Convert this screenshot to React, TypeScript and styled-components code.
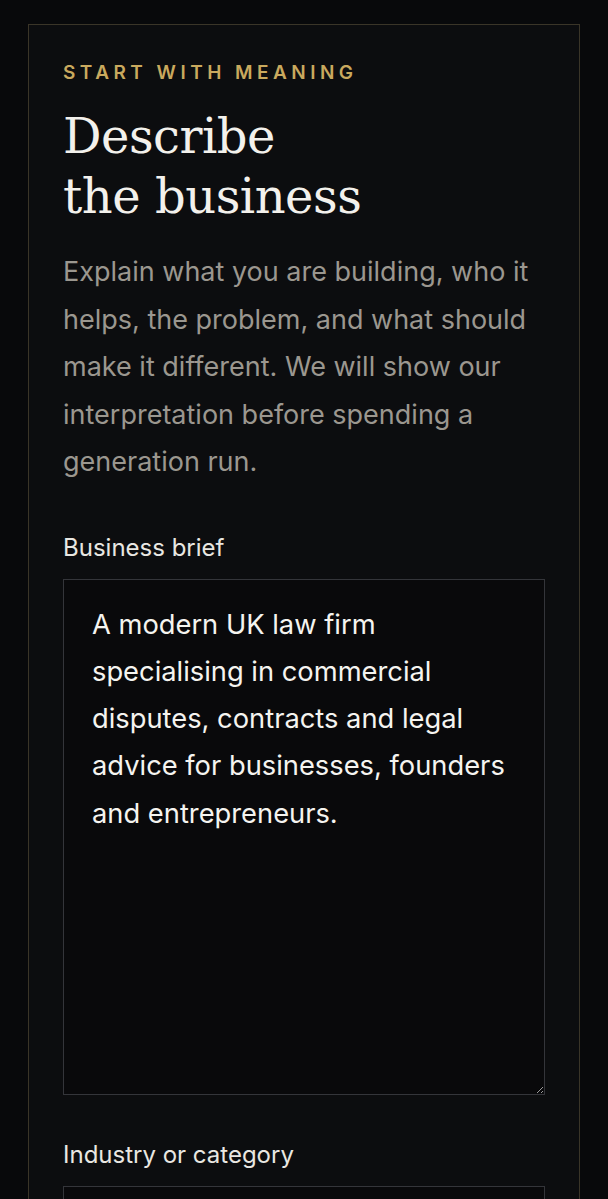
import React from 'react';
import styled, { createGlobalStyle } from 'styled-components';

const GlobalStyle = createGlobalStyle`
  html, body {
    margin: 0;
    padding: 0;
    background: #08090b;
  }
  body {
    font-family: Inter, 'Noto Sans', sans-serif;
    color: #ece9e2;
    overflow: hidden;
  }
  * {
    box-sizing: border-box;
  }
`;

const Page = styled.main`
  padding: 24px 28px 0;
  height: 1199px;
  overflow: hidden;
`;

const Panel = styled.section`
  background: #0c0d0f;
  border: 1px solid #3a3528;
  border-bottom: none;
  padding: 36px 34px 40px;
  min-height: 1175px;
`;

const Eyebrow = styled.p`
  margin: 0;
  font-family: Inter, sans-serif;
  font-size: 19px;
  font-weight: 600;
  letter-spacing: 0.235em;
  text-transform: uppercase;
  color: #c9a95e;
  line-height: 24px;
`;

const Title = styled.h1`
  margin: 21px 0 0;
  font-family: 'DejaVu Serif', 'Liberation Serif', serif;
  font-weight: 400;
  font-size: 48px;
  line-height: 60px;
  color: #f3f1ec;
  letter-spacing: -0.01em;
`;

const Lead = styled.p`
  margin: 22px 0 0;
  font-size: 27px;
  line-height: 47.5px;
  color: #9b978f;
  max-width: 482px;
`;

const Field = styled.label`
  display: flex;
  flex-direction: column;
  gap: 17px;
  margin-top: ${(p: { $top: number }) => p.$top}px;
`;

const FieldLabel = styled.span`
  font-size: 24px;
  line-height: 28px;
  color: #e9e7e2;
`;

const Brief = styled.textarea`
  display: block;
  width: 482px;
  height: 516px;
  resize: vertical;
  background: #09090b;
  border: 1px solid #34353a;
  border-radius: 0;
  color: #f5f4f0;
  font-family: Inter, sans-serif;
  font-size: 27.3px;
  line-height: 47.3px;
  padding: 21px 34px 21px 28px;
  outline: none;
`;

const TextInput = styled.input`
  display: block;
  width: 482px;
  height: 64px;
  background: #09090b;
  border: 1px solid #34353a;
  border-radius: 0;
  color: #f5f4f0;
  font-family: Inter, sans-serif;
  font-size: 26px;
  padding: 0 28px;
  outline: none;
`;

export default function App() {
  return (
    <>
      <GlobalStyle />
      <Page>
        <Panel>
          <Eyebrow>Start with meaning</Eyebrow>
          <Title>
            Describe
            <br />
            the business
          </Title>
          <Lead>
            Explain what you are building, who it helps, the problem, and what should make it
            different. We will show our interpretation before spending a generation run.
          </Lead>
          <Field $top={48}>
            <FieldLabel>Business brief</FieldLabel>
            <Brief
              defaultValue="A modern UK law firm specialising in commercial disputes, contracts and legal advice for businesses, founders and entrepreneurs."
            />
          </Field>
          <Field $top={46}>
            <FieldLabel>Industry or category</FieldLabel>
            <TextInput defaultValue="" />
          </Field>
        </Panel>
      </Page>
    </>
  );
}
